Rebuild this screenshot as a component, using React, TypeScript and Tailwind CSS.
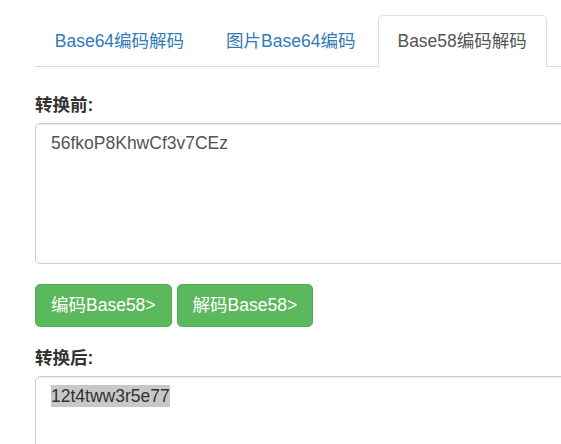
import React from "react";

const font = { fontFamily: '"Liberation Sans", Arial, "Noto Sans CJK SC", sans-serif' };

export default function App() {
  const tabs = ["Base64编码解码", "图片Base64编码", "Base58编码解码"];
  return (
    <div className="w-[561px] h-[444px] overflow-hidden bg-white" style={font}>
      <div className="w-[640px] pl-[35px] pt-[15px]">
        <ul className="flex border-b border-[#ddd]">
          {tabs.map((t, i) => {
            const active = i === 2;
            return (
              <li key={t} className="-mb-px mr-[2.5px]">
                <a
                  className={
                    active
                      ? "block px-[18.75px] py-[12.5px] text-[17.5px] leading-[25px] rounded-t-[5px] border border-[#ddd] border-b-transparent bg-white text-[#555]"
                      : "block px-[18.75px] py-[12.5px] text-[17.5px] leading-[25px] rounded-t-[5px] border border-transparent text-[#337ab7]"
                  }
                >
                  {t}
                </a>
              </li>
            );
          })}
        </ul>

        <div className="mt-[26px]">
          <div className="font-bold text-[17.5px] leading-[25px] text-[#333] mb-[4.5px]">转换前:</div>
          <div className="h-[141px] border border-[#ccc] rounded-[5px] px-[15px] py-[7.5px] text-[17.5px] leading-[25px] text-[#555] shadow-[inset_0_1px_1px_rgba(0,0,0,0.075)]">
            56fkoP8KhwCf3v7CEz
          </div>
        </div>

        <div className="flex gap-[5px] mt-[20px]">
          <button className="h-[43px] px-[15px] rounded-[5px] bg-[#5cb85c] border border-[#4cae4c] text-white text-[17.5px] leading-[25px]">
            编码Base58&gt;
          </button>
          <button className="h-[43px] px-[15px] rounded-[5px] bg-[#5cb85c] border border-[#4cae4c] text-white text-[17.5px] leading-[25px]">
            解码Base58&gt;
          </button>
        </div>

        <div className="mt-[19.5px]">
          <div className="font-bold text-[17.5px] leading-[25px] text-[#333] mb-[4.5px]">转换后:</div>
          <div className="h-[141px] border border-[#ccc] rounded-[5px] px-[15px] py-[7.5px] text-[17.5px] leading-[25px] text-[#555] shadow-[inset_0_1px_1px_rgba(0,0,0,0.075)]">
            <span className="bg-[#c8c8c8] text-[#333] py-[1px]">12t4tww3r5e77</span>
          </div>
        </div>
      </div>
    </div>
  );
}
